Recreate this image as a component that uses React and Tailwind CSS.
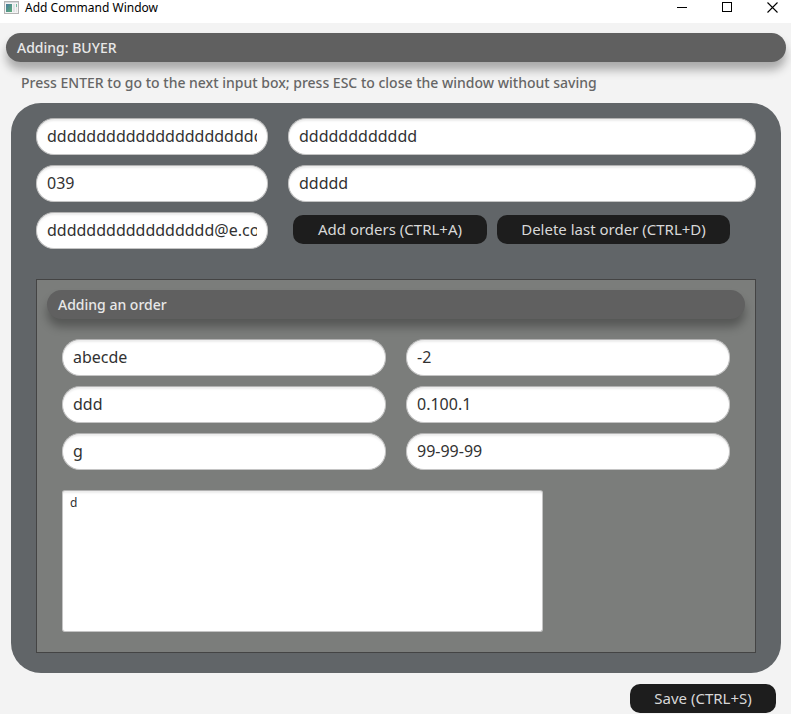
const fieldClass =
  "block h-[37px] w-full min-w-0 rounded-[18px] border border-[#c4c4c4] border-t-[#b2b2b2] bg-white px-[10px] pb-[2px] text-[16px] text-[#323232] shadow-[inset_0_3px_2px_-1px_#ececec] outline-none";

function Field({ label, value, type = "text" }) {
  return <input className={fieldClass} type={type} aria-label={label} defaultValue={value} spellCheck={false} />;
}

function ActionButton({ children, className }) {
  return (
    <button
      type="button"
      className={`h-[29px] rounded-[10px] bg-[#1d1d1d] text-center text-[15px] leading-[29px] whitespace-nowrap text-[#d8d8d8] ${className}`}
    >
      {children}
    </button>
  );
}

function Banner({ as: Tag, children }) {
  return (
    <Tag className="h-[29px] rounded-[15px] bg-[#606060] px-[11px] text-[14px] leading-[29px] font-medium text-[#e8e8e8] shadow-[0_8px_10px_rgba(0,0,0,0.3)]">
      {children}
    </Tag>
  );
}

function TitleBar() {
  return (
    <header className="flex h-[23px] items-start justify-between bg-white">
      <div className="flex items-center gap-[6px] pl-1">
        <svg className="h-[14px] w-[15px]" viewBox="0 0 15 14" aria-hidden="true">
          <defs>
            <linearGradient id="pane" x1="0" y1="0" x2="1" y2="1">
              <stop offset="0" stopColor="#4a7b9d" />
              <stop offset="1" stopColor="#5fae78" />
            </linearGradient>
          </defs>
          <rect x="0.5" y="0.5" width="14" height="12" fill="#f4f4f4" stroke="#b4b4b4" />
          <rect x="1" y="1" width="13" height="1" fill="#d5d9dd" />
          <rect x="2" y="3" width="6" height="8" fill="url(#pane)" />
          <rect x="9" y="3" width="2" height="8" fill="#dfe3e6" />
          <rect x="12" y="3" width="1" height="3" fill="#72bda0" />
          <rect x="12" y="6" width="1" height="5" fill="#e4e4e4" />
        </svg>
        <span className="text-[12px] leading-[16px] text-black">Add Command Window</span>
      </div>
      <div className="flex gap-[8px]">
        <button type="button" aria-label="Minimize" className="flex h-[14px] w-[37px] items-center justify-center">
          <svg width="11" height="11" viewBox="0 0 11 11" shapeRendering="crispEdges">
            <path d="M0 5.5H10" stroke="#000" />
          </svg>
        </button>
        <button type="button" aria-label="Maximize" className="flex h-[14px] w-[37px] items-center justify-center">
          <svg width="11" height="11" viewBox="0 0 11 11" shapeRendering="crispEdges">
            <path d="M0.5 0.5H9.5V9.5H0.5Z" fill="none" stroke="#000" />
          </svg>
        </button>
        <button type="button" aria-label="Close" className="flex h-[14px] w-[37px] items-center justify-center">
          <svg width="11" height="11" viewBox="0 0 11 11">
            <path d="M0.5 0.5L10.5 10.5M10.5 0.5L0.5 10.5" stroke="#000" strokeWidth="1.1" />
          </svg>
        </button>
      </div>
    </header>
  );
}

export default function App() {
  return (
    <div className="min-h-screen bg-[#f3f3f3] font-['Noto_Sans','Open_Sans',sans-serif]">
      <TitleBar />
      <main className="pt-[10px]">
        <div className="pr-[5px] pl-[6px]">
          <Banner as="h1">Adding: BUYER</Banner>
        </div>
        <p className="mt-[10px] px-[21px] text-[14px] leading-[21px] font-medium text-[#666666]">
          Press ENTER to go to the next input box; press ESC to close the window without saving
        </p>

        <form className="mt-[10px]">
          <div className="mr-[10px] ml-[11px] rounded-[30px] bg-[#616568] px-[25px] pt-[15px] pb-[20px]">
            <div className="grid grid-cols-[232fr_468fr] gap-x-[20px] gap-y-[10px]">
              <Field label="Name" value="dddddddddddddddddddddd" />
              <Field label="Address" value="dddddddddddd" />
              <Field label="Phone" value="039" />
              <Field label="City" value="ddddd" />
              <Field label="Email" value="ddddddddddddddddd@e.com" />
              <div className="flex gap-[10px] pt-[3px] pl-[5px]">
                <ActionButton className="w-[194px]">Add orders (CTRL+A)</ActionButton>
                <ActionButton className="w-[233px]">Delete last order (CTRL+D)</ActionButton>
              </div>
            </div>

            <section className="mt-[30px] border border-[#444444] bg-[#7b7d7b] px-[10px] pt-[10px] pb-[20px]">
              <Banner as="h2">Adding an order</Banner>
              <div className="mt-[20px] px-[15px]">
                <div className="grid grid-cols-2 gap-x-[20px] gap-y-[10px]">
                  <Field label="Product" value="abecde" />
                  <Field label="Quantity" value="-2" />
                  <Field label="Model" value="ddd" />
                  <Field label="Price" value="0.100.1" />
                  <Field label="Unit" value="g" />
                  <Field label="Date" value="99-99-99" />
                </div>
                <textarea
                  aria-label="Description"
                  defaultValue="d"
                  spellCheck={false}
                  className="mt-[20px] block h-[142px] w-[72%] resize-none rounded-[3px] border border-[#c4c4c4] border-t-[#b2b2b2] bg-white px-[7px] py-[4px] text-[12px] leading-[16px] text-[#323232] shadow-[inset_0_3px_2px_-1px_#ececec] outline-none"
                />
              </div>
            </section>
          </div>

          <div className="flex justify-end pt-[11px] pr-[15px]">
            <ActionButton className="w-[146px]">Save (CTRL+S)</ActionButton>
          </div>
        </form>
      </main>
    </div>
  );
}
